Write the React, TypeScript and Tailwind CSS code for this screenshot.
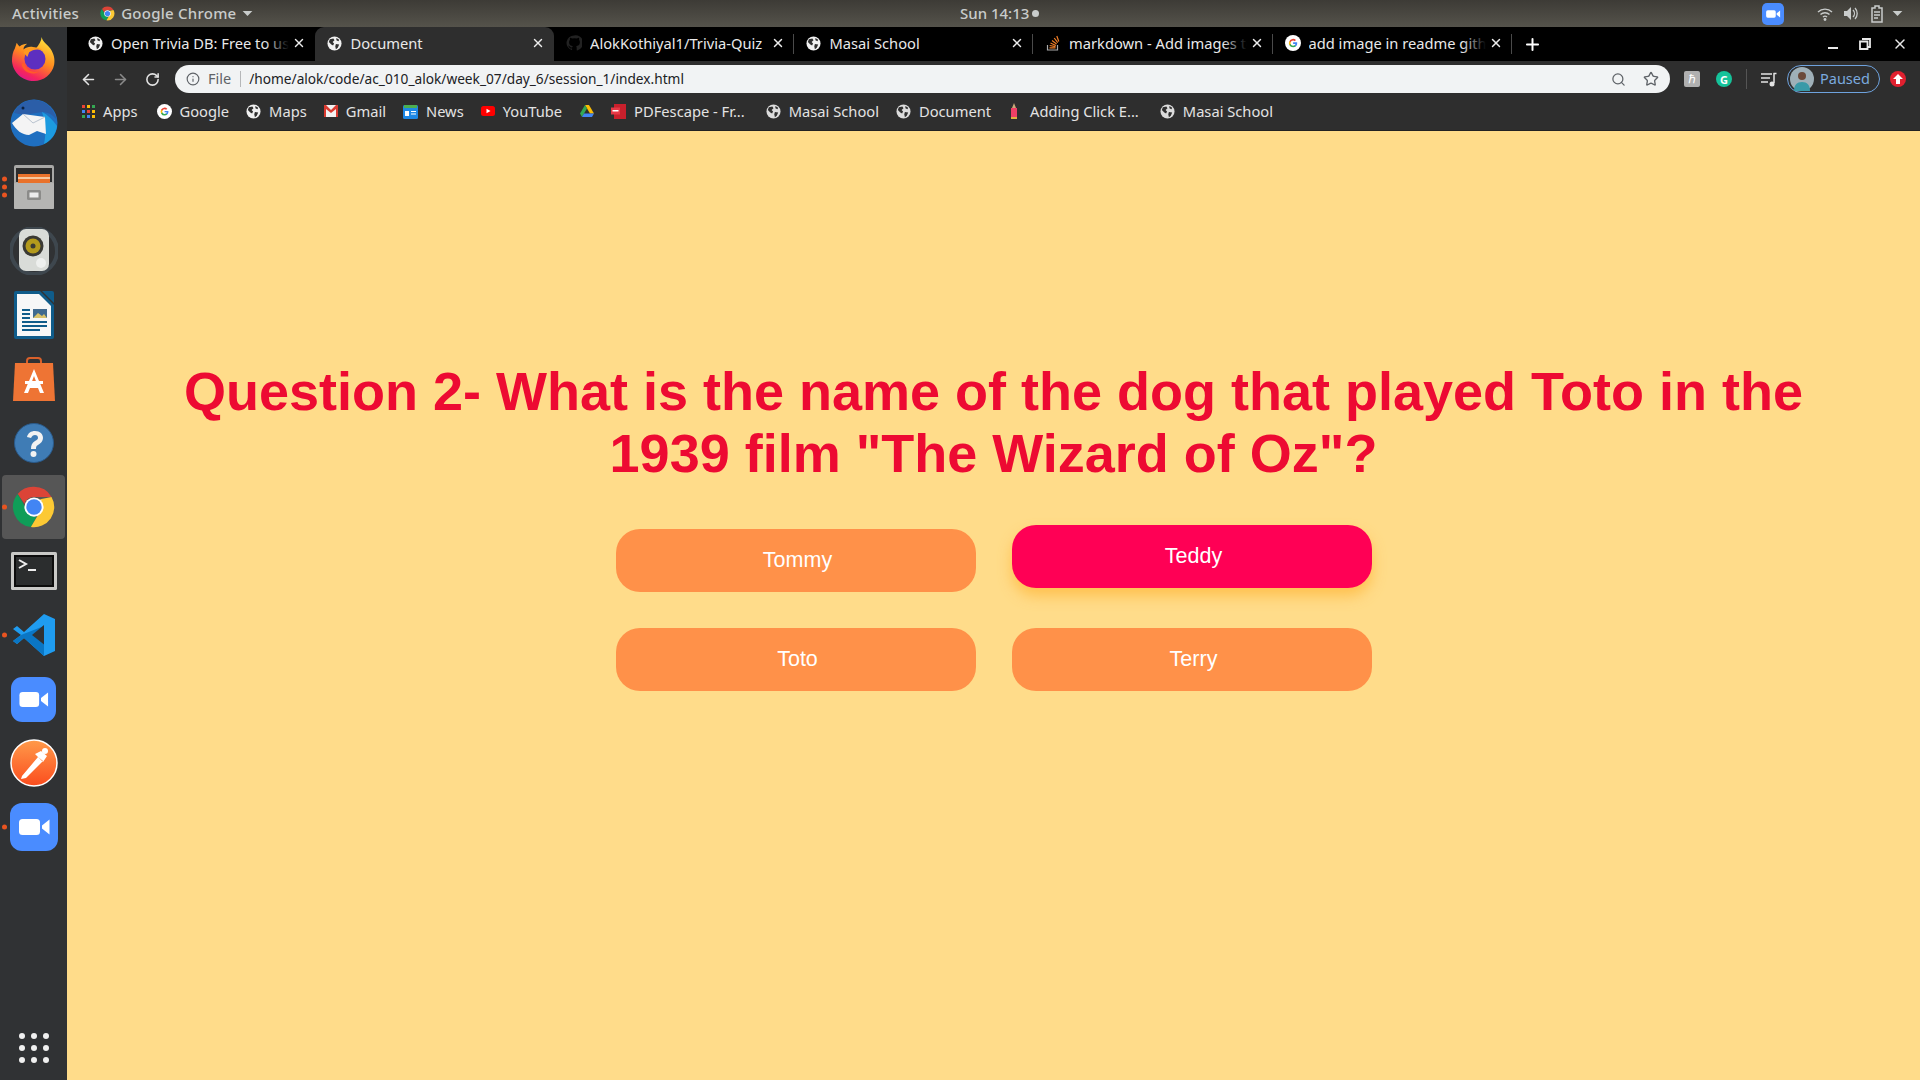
import { X, ArrowLeft, ArrowRight, RotateCw, Info, Search, Star, Plus, ChevronDown } from 'lucide-react';

const uiFont = "font-['Noto_Sans','Open_Sans',sans-serif]";

function Globe({ dim = false }: { dim?: boolean }) {
  return (
    <svg width="15" height="15" viewBox="0 0 16 16" className="shrink-0">
      <circle cx="8" cy="8" r="7.5" fill={dim ? '#dcdcdc' : '#f1f1f1'} />
      <path d="M3 3.5 6.8 2.6 8 4.6 6 6.5 7.5 8 6.5 10 4.6 9 2 6.5ZM9.5 8.5 13 9 11.5 12.5 9.5 14 8.8 11ZM10 2 13 4 12.2 5.5 10 4.5Z" fill="#2f2f2f" />
    </svg>
  );
}

function ChromeLogo({ size }: { size: number }) {
  return (
    <svg width={size} height={size} viewBox="0 0 48 48" className="shrink-0">
      <path d="M24 2a22 22 0 0 1 19.1 11H24a11 11 0 0 0-10.4 7.4L6.2 9.9A22 22 0 0 1 24 2Z" fill="#db4437" />
      <path d="M6.2 9.9 15.5 26a10 10 0 0 0 11.6 8.4L20.6 45.8A22 22 0 0 1 6.2 9.9Z" fill="#0f9d58" />
      <path d="M43.1 13A22 22 0 0 1 20.6 45.8L30 30a11 11 0 0 0 .6-14.5L43.1 13Z" fill="#fcc934" />
      <circle cx="24" cy="24" r="10.5" fill="#fff" />
      <circle cx="24" cy="24" r="8.4" fill="#4285f4" />
    </svg>
  );
}

function GoogleG({ size = 16 }: { size?: number }) {
  return (
    <svg width={size} height={size} viewBox="0 0 48 48" className="shrink-0">
      <circle cx="24" cy="24" r="24" fill="#fff" />
      <path d="M36.6 24.5c0-.9-.1-1.700-.2-2.500H24.300v4.700h6.900a5.900 5.900 0 0 1-2.600 3.900v3.200h4.200c2.400-2.300 3.800-5.600 3.800-9.300Z" fill="#4285f4" />
      <path d="M24.300 37c3.500 0 6.400-1.200 8.500-3.100l-4.200-3.200c-1.100.8-2.600 1.200-4.300 1.200-3.300 0-6.100-2.200-7.100-5.200h-4.300v3.300A12.800 12.800 0 0 0 24.300 37Z" fill="#34a853" />
      <path d="M17.200 26.700a7.700 7.700 0 0 1 0-4.900v-3.300h-4.300a12.800 12.800 0 0 0 0 11.500l4.300-3.300Z" fill="#fbbc05" />
      <path d="M24.300 16.600c1.900 0 3.600.6 4.900 1.900l3.700-3.700A12.800 12.800 0 0 0 12.900 18.500l4.300 3.300c1-3 3.800-5.200 7.100-5.200Z" fill="#ea4335" />
    </svg>
  );
}

function ZoomGlyph({ size, radius }: { size: number; radius: number }) {
  return (
    <svg width={size} height={size} viewBox="0 0 48 48" className="shrink-0">
      <rect width="48" height="48" rx={radius} fill="#4a8cff" />
      <rect x="9" y="16" width="21" height="16" rx="3.500" fill="#fff" />
      <path d="M32 22.500 39.500 16.500v15L32 25.500Z" fill="#fff" />
    </svg>
  );
}

function AppsGrid() {
  const colors = ['#ea4335', '#fbbc05', '#34a853', '#4285f4', '#ea4335', '#fbbc05', '#34a853', '#4285f4', '#fbbc05'];
  return (
    <div className="grid w-[13px] shrink-0 grid-cols-3 gap-[2px]">
      {colors.map((c, i) => (
        <span key={i} className="h-[3px] w-[3px]" style={{ background: c }} />
      ))}
    </div>
  );
}

function Firefox() {
  return (
    <svg width="46" height="48" viewBox="0 0 48 48">
      <defs>
        <linearGradient id="ff" x1="0.7" y1="0" x2="0.2" y2="1">
          <stop offset="0" stopColor="#ffe03a" />
          <stop offset="0.45" stopColor="#ff8a1f" />
          <stop offset="0.8" stopColor="#f5255d" />
          <stop offset="1" stopColor="#d6149a" />
        </linearGradient>
      </defs>
      <path d="M32 1c1 5 5 7 9 12 4 6 5 11 4 17-2 10-11 17-21 17C12 47 2 38 1 26c0-5 1-10 3-13l2-6c1 2 2 3 3 4 2-2 5-3 8-3-2 1-4 3-4 6 4-3 9-4 13-1 3-4 6-8 6-12Z" fill="url(#ff)" />
      <circle cx="25" cy="24" r="11" fill="#5d2fc0" />
      <path d="M13 17c5-6 14-7 20-2-5-2-11-1-14 2l-2 5Z" fill="#ff9a1f" />
      <path d="M14 28c1 7 8 11 15 9-6 5-17 1-18-8Z" fill="#ff5a2a" />
    </svg>
  );
}

function Thunderbird() {
  return (
    <svg width="48" height="48" viewBox="0 0 48 48">
      <circle cx="24" cy="24" r="23.500" fill="#1f6fc0" />
      <path d="M4 14C8 5 18 0 26 1c10 1 18 9 21 20-5-6-10-8-15-8L14 16Z" fill="#2b5ea8" />
      <path d="M32 13c6 3 11 8 15 14-1 8-6 15-13 18 2-9 2-20-2-32Z" fill="#1c9be0" />
      <path d="M2 24 13 15l22 3 1 17-9-3-8 4C12 36 6 31 2 24Z" fill="#f4f4f4" />
      <path d="M13 15 23 24 35 18" fill="none" stroke="#b9c3cf" strokeWidth="1" />
      <circle cx="13" cy="9" r="1.500" fill="#0d2240" />
    </svg>
  );
}

function FilesCabinet() {
  return (
    <svg width="40" height="44" viewBox="0 0 40 44">
      <rect x="0" y="0" width="40" height="44" rx="2" fill="#a8a8a6" />
      <rect x="2" y="3" width="36" height="14" fill="#2c2c2c" />
      <rect x="4" y="9" width="32" height="9" fill="#e9722b" />
      <rect x="4" y="12" width="32" height="2" fill="#f5c69c" />
      <rect x="0" y="18" width="40" height="26" rx="1" fill="#b5b5b3" />
      <rect x="13" y="25" width="14" height="10" rx="1.500" fill="#8b8b89" />
      <rect x="15.500" y="27.500" width="9" height="5" fill="#ececec" />
    </svg>
  );
}

function Speaker() {
  return (
    <svg width="48" height="48" viewBox="0 0 48 48">
      <circle cx="24" cy="24" r="23" fill="none" stroke="#45505a" strokeWidth="4" opacity="0.7" />
      <rect x="9" y="2" width="30" height="42" rx="7" fill="#d9dcd8" />
      <circle cx="23" cy="19" r="10.500" fill="#3a3a34" />
      <circle cx="23" cy="19" r="7.500" fill="#b39a1c" />
      <circle cx="23" cy="19" r="2.500" fill="#3a3a34" />
      <circle cx="31" cy="36" r="5" fill="#eef0ee" />
    </svg>
  );
}

function Writer() {
  return (
    <svg width="40" height="48" viewBox="0 0 40 48">
      <path d="M0 2a2 2 0 0 1 2-2h24l14 14v32a2 2 0 0 1-2 2H2a2 2 0 0 1-2-2Z" fill="#0f5c8a" />
      <path d="M3 3h22l12 12v30H3Z" fill="#f6f7f7" />
      <path d="M28 0h10a2 2 0 0 1 2 2v10Z" fill="#0f5c8a" />
      <path d="M8 18h8v2H8ZM8 22h8v2H8ZM8 26h8v2H8ZM8 30h25v2H8ZM8 34h25v2H8ZM8 38h18v2H8Z" fill="#0f5c8a" />
      <rect x="19" y="18" width="14" height="9" fill="#3f6a8e" />
      <path d="M19 27l5-5 4 3 2-2 3 4Z" fill="#d9c36a" />
    </svg>
  );
}

function AppStore() {
  return (
    <svg width="42" height="44" viewBox="0 0 42 44">
      <path d="M14 7V4a3 3 0 0 1 3-3h8a3 3 0 0 1 3 3v3" fill="none" stroke="#d9602a" strokeWidth="2" />
      <path d="M2 6h38l2 38H0Z" fill="#ee7434" />
      <path d="M21 12 31 36h-4l-2-5h-8l-2 5h-4ZM18 27h6l-3-8Z" fill="#fff" />
      <rect x="12" y="24" width="18" height="3" fill="#fff" />
    </svg>
  );
}

function Help() {
  return (
    <svg width="40" height="40" viewBox="0 0 40 40">
      <circle cx="20" cy="20" r="19.500" fill="#3f7cb5" />
      <circle cx="20" cy="20" r="19.500" fill="none" stroke="#2a5a8a" />
      <path d="M13 14c1-4 4-6 8-6 5 0 8 3 8 7 0 3-2 5-5 7-2 1-2 2-2 4h-5c0-4 1-6 4-8 2-1 3-2 3-3 0-2-1-3-3-3s-3 1-4 3Z" fill="#f2f2f2" />
      <circle cx="19.500" cy="31" r="3" fill="#f2f2f2" />
    </svg>
  );
}

function Terminal() {
  return (
    <svg width="46" height="38" viewBox="0 0 46 38">
      <rect width="46" height="38" rx="1.500" fill="#c9c9c7" />
      <rect x="3" y="3" width="40" height="32" fill="#0c0c0c" />
      <rect x="5" y="5" width="36" height="28" fill="#2b2d2e" />
      <path d="M8 8 15 12 8 16" fill="none" stroke="#eee" strokeWidth="2" />
      <rect x="17" y="17" width="8" height="2" fill="#eee" />
    </svg>
  );
}

function VSCode() {
  return (
    <svg width="42" height="42" viewBox="0 0 42 42">
      <path d="M31 0 42 5v32l-11 5L11 24l-7 6-4-3 8-6-8-6 4-3 7 6Z" fill="#1f9cf0" />
      <path d="M31 0v42L11 24l-7 6-4-3 8-6L31 12V30L19 21l12-9Z" fill="#0a76c4" />
      <path d="M31 11 19 21l12 9.500Z" fill="#303234" />
    </svg>
  );
}

function Postman() {
  return (
    <svg width="48" height="48" viewBox="0 0 48 48">
      <defs>
        <linearGradient id="pm" x1="0.5" y1="0" x2="0.5" y2="1">
          <stop offset="0" stopColor="#ff9a4a" />
          <stop offset="1" stopColor="#fb4d1e" />
        </linearGradient>
      </defs>
      <circle cx="24" cy="24" r="23" fill="url(#pm)" stroke="#fff" strokeWidth="1.500" />
      <path d="M12 37 28 18l5 4-17 17-5 1ZM25 15l8 8 4-6-6-5Z" fill="#fff" />
      <circle cx="35" cy="12" r="3" fill="#fff" />
    </svg>
  );
}

function Dot() {
  return <span className="h-[5px] w-[5px] rounded-full bg-[#e95420]" />;
}

function DockItem({ children, dots = 0, active = false }: { children: React.ReactNode; dots?: number; active?: boolean }) {
  return (
    <div className="relative flex h-[64px] w-[67px] items-center justify-center">
      {active && <div className="absolute inset-x-[2px] inset-y-0 rounded-[4px] bg-[#565656]" />}
      {dots > 0 && (
        <div className="absolute left-[2px] top-1/2 flex -translate-y-1/2 flex-col gap-[3px]">
          {Array.from({ length: dots }).map((_, i) => (
            <Dot key={i} />
          ))}
        </div>
      )}
      <div className="relative flex items-center justify-center">{children}</div>
    </div>
  );
}

function Dock() {
  return (
    <aside className="flex w-[67px] shrink-0 flex-col bg-[#303234]">
      <div className="flex flex-col">
        <DockItem><Firefox /></DockItem>
        <DockItem><Thunderbird /></DockItem>
        <DockItem dots={3}><FilesCabinet /></DockItem>
        <DockItem><Speaker /></DockItem>
        <DockItem><Writer /></DockItem>
        <DockItem><AppStore /></DockItem>
        <DockItem><Help /></DockItem>
        <DockItem dots={1} active><ChromeLogo size={44} /></DockItem>
        <DockItem><Terminal /></DockItem>
        <DockItem dots={1}><VSCode /></DockItem>
        <DockItem><ZoomGlyph size={45} radius={12} /></DockItem>
        <DockItem><Postman /></DockItem>
        <DockItem dots={1}><ZoomGlyph size={48} radius={12} /></DockItem>
      </div>
      <div className="mt-auto mb-[17px] grid w-[30px] grid-cols-3 gap-[6px] self-center">
        {Array.from({ length: 9 }).map((_, i) => (
          <span key={i} className="h-[6px] w-[6px] rounded-full bg-[#f0f0f0]" />
        ))}
      </div>
    </aside>
  );
}

function TopBar() {
  return (
    <header className={`relative flex h-[27px] shrink-0 items-center justify-between bg-gradient-to-b from-[#3d3b36] to-[#55534b] pl-[12px] pr-[16px] text-[15px] font-medium text-[#c9cccb] ${uiFont}`}>
      <div className="flex items-center tracking-[0.25px]">
        <span>Activities</span>
        <span className="ml-[21px] flex items-center gap-[6px]">
          <ChromeLogo size={15} />
          Google Chrome
          <ChevronDown size={13} fill="currentColor" strokeWidth={0} className="ml-[-1px] scale-150" />
        </span>
      </div>
      <div className="absolute left-[960px] flex items-center gap-[3px]">
        <span>Sun 14:13</span>
        <span className="h-[7px] w-[7px] rounded-full bg-[#c9cccb]" />
      </div>
      <div className="flex items-center">
        <ZoomGlyph size={22} radius={11} />
        <svg width="16" height="14" viewBox="0 0 16 14" className="ml-[33px]">
          <path d="M1 5a10 10 0 0 1 14 0M3.500 7.500a6.500 6.500 0 0 1 9 0M6 10a3 3 0 0 1 4 0" fill="none" stroke="#c9cccb" strokeWidth="1.400" />
          <circle cx="8" cy="12.500" r="1.400" fill="#c9cccb" />
        </svg>
        <svg width="16" height="15" viewBox="0 0 16 15" className="ml-[10px]">
          <path d="M1 5h3l4-4v13l-4-4H1Z" fill="#c9cccb" />
          <path d="M10 4a5 5 0 0 1 0 7M12 2a8 8 0 0 1 0 11" fill="none" stroke="#c9cccb" strokeWidth="1.300" />
        </svg>
        <svg width="12" height="18" viewBox="0 0 12 18" className="ml-[12px]">
          <path d="M1 3h3V1h4v2h3v14H1Z" fill="none" stroke="#c9cccb" strokeWidth="1.500" />
          <path d="M3 7h6M3 10h6M3 13h4" stroke="#c9cccb" strokeWidth="1.300" />
        </svg>
        <ChevronDown size={13} fill="#c9cccb" strokeWidth={0} className="ml-[8px] scale-150" />
      </div>
    </header>
  );
}

function Tab({ title, icon, active = false, fade = false, sep = true }: { title: string; icon: React.ReactNode; active?: boolean; fade?: boolean; sep?: boolean }) {
  return (
    <div className={`relative flex h-full w-[239.500px] shrink-0 items-center pb-[2px] pl-[12px] pr-[9px] text-[14.700px] ${active ? 'rounded-t-[9px] bg-[#2e2e2e]' : ''} text-[#e9e9e9]`}>
      <span className="flex w-[16px] shrink-0 justify-center">{icon}</span>
      <span className="ml-[8px] min-w-0 flex-1 overflow-hidden whitespace-nowrap">
        {title}
      </span>
      {fade && <span className="absolute right-[26px] top-0 h-full w-[24px] bg-gradient-to-r from-transparent to-black" />}
      <X size={14} strokeWidth={2.500} className="relative ml-[3px] shrink-0 text-[#ececec]" />
      {sep && <span className="absolute right-0 top-[7px] h-[20px] w-px bg-[#4a4a4a]" />}
    </div>
  );
}

function TabStrip() {
  return (
    <div className={`flex h-[34px] items-end bg-black pl-[8px] ${uiFont}`}>
      <div className="flex h-[34px]">
        <Tab title="Open Trivia DB: Free to use" icon={<Globe />} fade sep={false} />
        <Tab title="Document" icon={<Globe />} active sep={false} />
        <Tab
          title="AlokKothiyal1/Trivia-Quiz"
          icon={
            <svg width="16" height="16" viewBox="0 0 16 16">
              <path d="M8 .5a7.500 7.500 0 0 0-2.400 14.600c.4.100.5-.2.500-.4v-1.300c-2.100.4-2.600-.5-2.800-1-.1-.2-.5-1-.8-1.100-.3-.2-.7-.5 0-.5s1.100.6 1.300.8c.8 1.300 2 .9 2.500.7.100-.5.300-.9.600-1.100-1.900-.2-3.800-.9-3.800-4.100 0-.9.300-1.700.9-2.300-.1-.2-.4-1 .1-2.100 0 0 .7-.2 2.300.9a7.900 7.900 0 0 1 4.200 0c1.600-1.100 2.300-.9 2.300-.9.500 1.100.2 1.900.1 2.100.5.600.9 1.400.9 2.300 0 3.200-2 3.900-3.800 4.100.3.300.6.800.6 1.500v2.300c0 .2.100.500.500.400A7.500 7.500 0 0 0 8 .5Z" fill="#222" />
            </svg>
          }
        />
        <Tab title="Masai School" icon={<Globe />} />
        <Tab
          title="markdown - Add images to readme"
          fade
          icon={
            <svg width="14" height="16" viewBox="0 0 14 16">
              <path d="M1.500 10v5h10v-5" fill="none" stroke="#aaa" strokeWidth="1.200" />
              <path d="M3.500 12.800h6M3.700 10.500l5.800 1.200M4.500 8l5.400 2.500M6 5.500l4.600 3.500M8.200 3l3.500 4.600M10.800 1l2 5.500" stroke="#f27f27" strokeWidth="1.200" />
            </svg>
          }
        />
        <Tab title="add image in readme github" icon={<GoogleG />} fade />
      </div>
      <div className="flex h-[34px] items-center pl-[11px]">
        <Plus size={19} strokeWidth={2.500} className="text-white" />
      </div>
      <div className="ml-auto flex h-[34px] items-center gap-[21px] pr-[12px] text-[#e8e8e8]">
        <span className="mt-[8px] h-[2px] w-[10px] bg-[#e8e8e8]" />
        <svg width="12" height="12" viewBox="0 0 12 12">
          <path d="M3 1h8v8H8.500M1 3.500h7.500V11H1Z" fill="none" stroke="#e8e8e8" strokeWidth="1.800" />
        </svg>
        <X size={16} strokeWidth={2.200} />
      </div>
    </div>
  );
}

function Toolbar() {
  return (
    <div className={`flex h-[32px] items-start bg-[#2e2e2e] pl-[13px] ${uiFont}`}>
      <div className="flex h-[32px] shrink-0 items-center pt-[4px]">
        <ArrowLeft size={17} strokeWidth={2.200} className="text-[#e3e3e3]" />
        <ArrowRight size={17} strokeWidth={2.200} className="ml-[15px] text-[#8a8a8a]" />
        <RotateCw size={15} strokeWidth={2.500} className="ml-[16px] text-[#e3e3e3]" />
      </div>
      <div className="ml-[15px] mt-[4px] flex h-[28px] w-[1495px] shrink-0 items-center rounded-full bg-[#f1f3f4] pl-[11px] pr-[10px]">
        <Info size={14} className="text-[#5f6368]" />
        <span className="ml-[8px] text-[14.500px] text-[#5f6368]">File</span>
        <span className="ml-[9px] h-[16px] w-px bg-[#b5b7b9]" />
        <span className="ml-[8px] text-[13.700px] text-[#202124]">/home/alok/code/ac_010_alok/week_07/day_6/session_1/index.html</span>
        <Search size={15} className="ml-auto text-[#5f6368]" />
        <Star size={16} strokeWidth={2} className="ml-[17px] mr-[1px] text-[#5f6368]" />
      </div>
      <div className="flex h-[32px] items-center pl-[14px] pt-[4px]">
        <span className="flex h-[16px] w-[16px] items-center justify-center rounded-[2px] bg-[#b0b0b0] text-[12px] leading-none text-white">ℏ</span>
        <span className="ml-[16px] flex h-[16px] w-[16px] items-center justify-center rounded-full bg-[#15c39a] text-[11px] font-bold leading-none text-white">G</span>
        <span className="ml-[14px] h-[20px] w-px bg-[#555]" />
        <svg width="16" height="15" viewBox="0 0 16 15" className="ml-[14px]">
          <path d="M0 2h11M0 6h9M0 10h7" stroke="#e3e3e3" strokeWidth="1.500" />
          <path d="M12.500 1.500h3M13 1v10" stroke="#e3e3e3" strokeWidth="1.500" />
          <circle cx="11" cy="12" r="2.500" fill="#e3e3e3" />
        </svg>
        <div className="ml-[10px] flex h-[28px] w-[93px] shrink-0 items-center rounded-full border border-[#6ea2dd] pl-[2px] text-[#7baadf]">
          <svg width="24" height="24" viewBox="0 0 24 24" className="shrink-0">
            <circle cx="12" cy="12" r="12" fill="#9fb0b8" />
            <path d="M4 24c0-6 3-9 8-9s8 3 8 9Z" fill="#3a9aa8" />
            <circle cx="12" cy="9" r="4" fill="#6b4a3a" />
          </svg>
          <span className="ml-[6px] text-[14.500px]">Paused</span>
        </div>
        <span className="ml-[10px] flex h-[16px] w-[16px] shrink-0 items-center justify-center rounded-full bg-[#e0202f]">
          <svg width="10" height="10" viewBox="0 0 10 10">
            <path d="M5 0 10 5H7v5H3V5H0Z" fill="#fff" />
          </svg>
        </span>
      </div>
    </div>
  );
}

function Bookmark({ label, icon, className = '' }: { label?: string; icon: React.ReactNode; className?: string }) {
  return (
    <div className={`flex items-center gap-[8px] whitespace-nowrap ${className}`}>
      {icon}
      {label && <span>{label}</span>}
    </div>
  );
}

function BookmarkBar() {
  return (
    <div className={`flex h-[38px] items-center gap-[17px] border-b border-[#222] bg-[#2e2e2e] pl-[15px] text-[14.700px] text-[#e3e3e3] ${uiFont}`}>
      <Bookmark label="Apps" icon={<AppsGrid />} className="mr-[2px]" />
      <Bookmark label="Google" icon={<GoogleG size={15} />} />
      <Bookmark label="Maps" icon={<Globe />} />
      <Bookmark
        label="Gmail"
        icon={
          <svg width="14" height="12" viewBox="0 0 14 12">
            <rect width="14" height="12" fill="#f2f2f2" />
            <path d="M0 0h2l5 5 5-5h2v12h-2V4L7 8 2 4v8H0Z" fill="#d93a30" />
          </svg>
        }
      />
      <Bookmark
        label="News"
        icon={
          <svg width="15" height="15" viewBox="0 0 15 15">
            <rect y="1" width="15" height="14" rx="1.500" fill="#1e88e5" />
            <path d="M1 1h13v3H1Z" fill="#4caf50" />
            <path d="M2 7h4v5H2ZM8 7h5v1H8ZM8 9.500h5v1H8Z" fill="#fff" />
          </svg>
        }
      />
      <Bookmark
        label="YouTube"
        icon={
          <svg width="14" height="14" viewBox="0 0 14 14">
            <rect y="2" width="14" height="10" rx="2.500" fill="#f00" />
            <path d="M5.500 4.800 9.500 7l-4 2.200Z" fill="#fff" />
          </svg>
        }
      />
      <Bookmark
        className="ml-[1px]"
        icon={
          <svg width="14" height="13" viewBox="0 0 14 13">
            <path d="M5 0h4l5 8.500h-4Z" fill="#fbbc05" />
            <path d="M5 0 0 8.500 2 12l5-8.500Z" fill="#34a853" />
            <path d="M2 12h10l2-3.500H4Z" fill="#4285f4" />
          </svg>
        }
      />
      <Bookmark
        label="PDFescape - Fr..."
        className="mr-[4px]"
        icon={
          <svg width="15" height="15" viewBox="0 0 15 15">
            <rect x="3" y="0" width="12" height="15" fill="#c9202c" />
            <rect x="0" y="3.500" width="9" height="7" fill="#e63946" />
            <rect x="1.500" y="6" width="6" height="1.500" fill="#fff" />
          </svg>
        }
      />
      <Bookmark label="Masai School" icon={<Globe dim />} />
      <Bookmark label="Document" icon={<Globe dim />} />
      <Bookmark
        label="Adding Click E..."
        className="mr-[4px]"
        icon={
          <svg width="8" height="16" viewBox="0 0 8 16" className="ml-[2px] mr-[4px]">
            <path d="M4 0 6 5H2Z" fill="#c8a878" />
            <rect x="1" y="5" width="6" height="9" fill="#ef3f66" />
            <rect x="1" y="14" width="6" height="2" fill="#e0b040" />
          </svg>
        }
      />
      <Bookmark label="Masai School" icon={<Globe dim />} />
    </div>
  );
}

function AnswerButton({ label, hovered = false }: { label: string; hovered?: boolean }) {
  return (
    <button
      className={`flex h-[63px] w-[360px] items-center justify-center rounded-[24px] pl-[4px] text-[21.500px] text-white ${
        hovered ? '-translate-y-[4px] bg-[#ff0055] shadow-[0_8px_14px_rgba(255,184,60,0.75)]' : 'bg-[#ff9149]'
      }`}
    >
      {label}
    </button>
  );
}

export default function App() {
  return (
    <div className="flex h-screen w-full flex-col overflow-hidden bg-[#303234]">
      <TopBar />
      <div className="flex min-h-0 flex-1">
        <Dock />
        <div className="flex min-w-0 flex-1 flex-col">
          <TabStrip />
          <Toolbar />
          <BookmarkBar />
          <main className="flex flex-1 flex-col items-center bg-[#ffdc8a] pt-[229px] font-['Liberation_Sans',Arial,sans-serif]">
            <h1 className="text-center text-[54px] font-bold leading-[62px] text-[#ed0a32]">
              Question 2- What is the name of the dog that played Toto in the
              <br />
              1939 film "The Wizard of Oz"?
            </h1>
            <div className="mt-[45px] grid grid-cols-[360px_360px] gap-[36px]">
              <AnswerButton label="Tommy" />
              <AnswerButton label="Teddy" hovered />
              <AnswerButton label="Toto" />
              <AnswerButton label="Terry" />
            </div>
          </main>
        </div>
      </div>
    </div>
  );
}
